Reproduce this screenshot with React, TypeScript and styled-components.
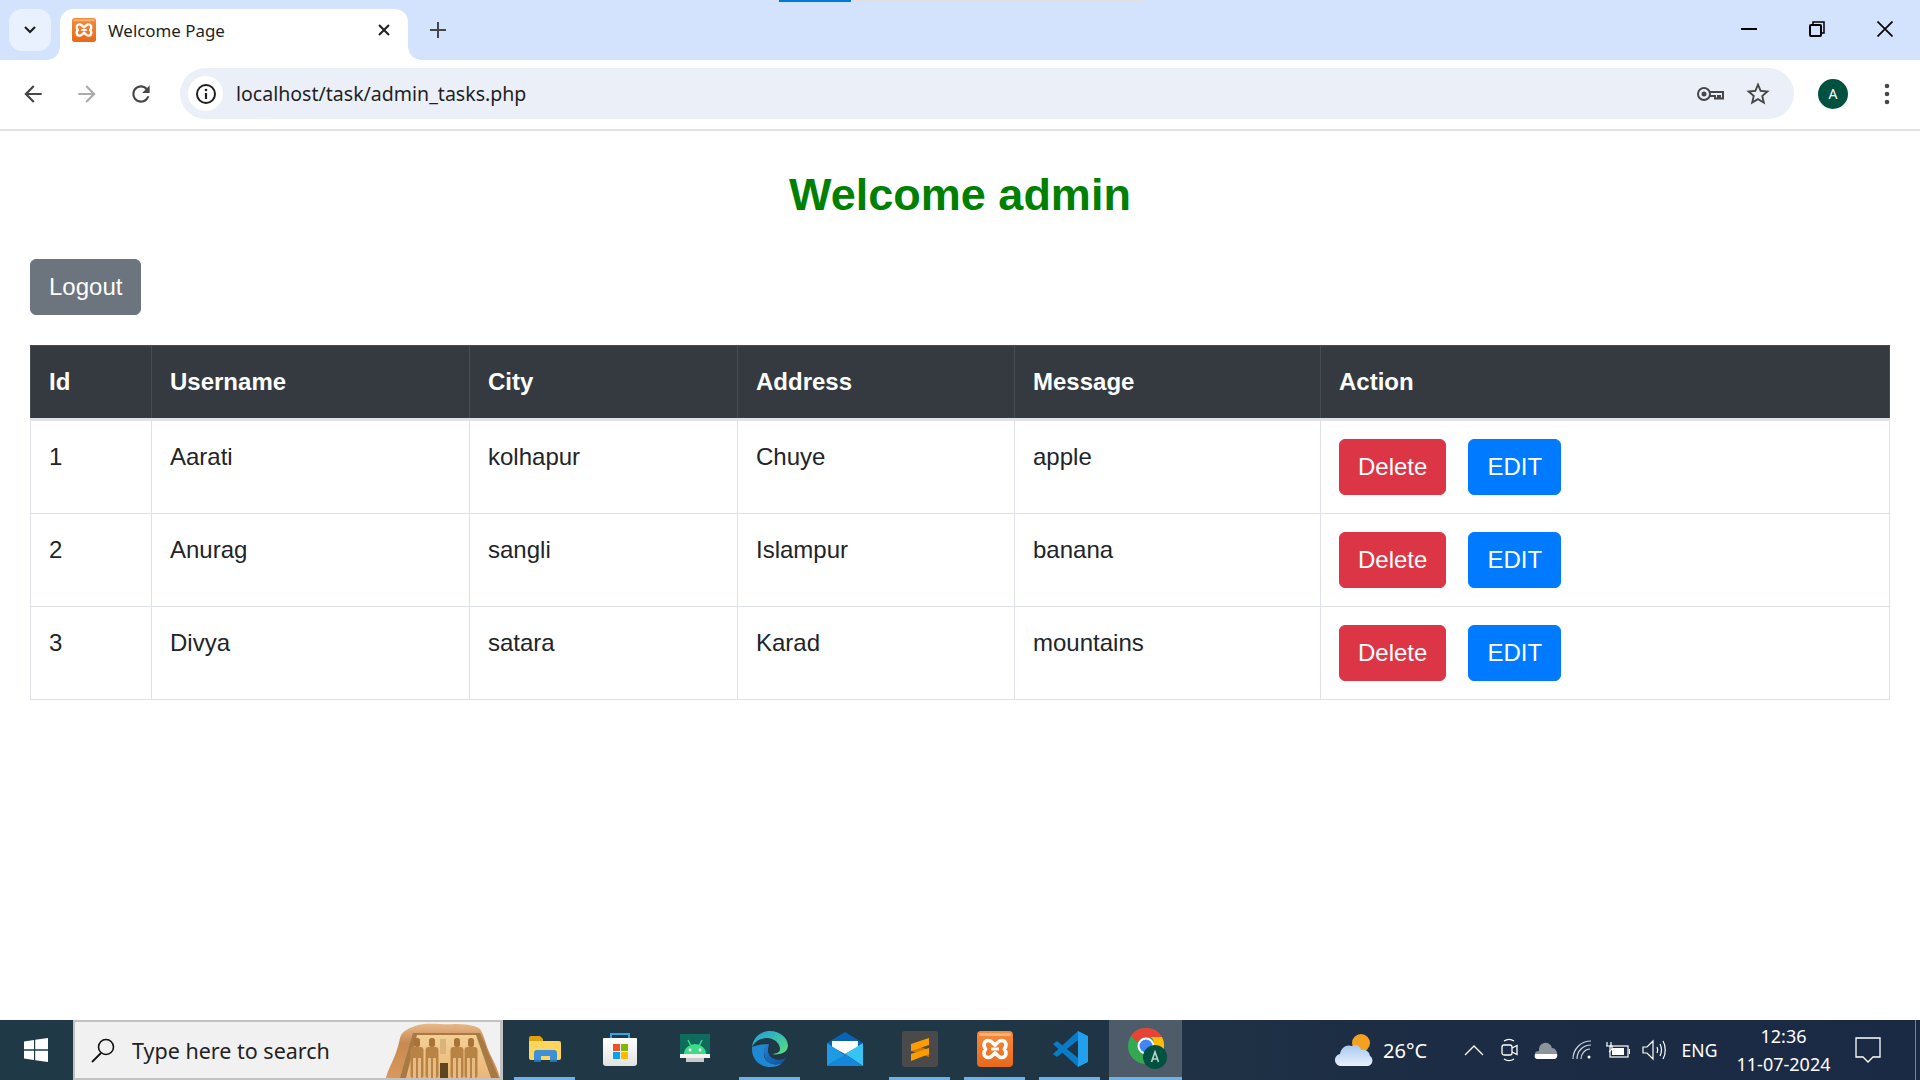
import React from 'react'
import styled, { createGlobalStyle } from 'styled-components'

const GlobalStyle = createGlobalStyle`
  html, body {
    margin: 0;
    height: 100%;
    overflow: hidden;
    background: #fff;
  }
  * {
    box-sizing: border-box;
  }
`

const UI_FONT = `'Noto Sans', 'Open Sans', sans-serif`
const PAGE_FONT = `'Liberation Sans', Arial, sans-serif`

const Screen = styled.div`
  width: 1920px;
  height: 1080px;
  display: flex;
  flex-direction: column;
  font-family: ${PAGE_FONT};
`

// browser tab strip
const TabStrip = styled.div`
  position: relative;
  height: 60px;
  flex: none;
  display: flex;
  align-items: flex-start;
  padding: 9px 0 0 9px;
  background: #d3e3fd;
`

const LoadBar = styled.div<{ $left: number; $width: number; $color: string }>`
  position: absolute;
  top: 0;
  left: ${p => p.$left}px;
  width: ${p => p.$width}px;
  height: 2px;
  background: ${p => p.$color};
`

const TabSearch = styled.div`
  width: 42px;
  height: 42px;
  flex: none;
  display: flex;
  align-items: center;
  justify-content: center;
  border-radius: 13px;
  background: #e9f0fe;
`

const Tab = styled.div`
  position: relative;
  width: 348px;
  height: 51px;
  margin-left: 9px;
  flex: none;
  display: flex;
  align-items: center;
  gap: 12px;
  padding: 0 18px 9px 12px;
  border-radius: 13px 13px 0 0;
  background: #fff;

  &:before,
  &:after {
    content: '';
    position: absolute;
    bottom: 0;
    width: 13px;
    height: 13px;
  }
  &:before {
    left: -13px;
    background: radial-gradient(circle at 0 0, #d3e3fd 12.5px, #fff 13px);
  }
  &:after {
    right: -13px;
    background: radial-gradient(circle at 100% 0, #d3e3fd 12.5px, #fff 13px);
  }
`

const TabTitle = styled.span`
  flex: 1;
  padding-top: 1px;
  font-family: ${UI_FONT};
  font-size: 16.9px;
  color: #1f1f1f;
`

const NewTab = styled.div`
  width: 30px;
  height: 30px;
  margin: 6px 0 0 15px;
  display: flex;
  align-items: center;
  justify-content: center;
`

const WindowControls = styled.div`
  display: flex;
  margin-left: auto;
  padding: 0 1px 0 0;
`

const WindowButton = styled.div`
  width: 68px;
  height: 42px;
  margin-top: -1px;
  display: flex;
  align-items: center;
  justify-content: center;
`

// address bar row
const Toolbar = styled.div`
  height: 71px;
  flex: none;
  display: flex;
  align-items: center;
  padding: 0 0 2px 6px;
  border-bottom: 2px solid #e3e3e3;
  border-radius: 12px 12px 0 0;
  background: #fff;
`

const ToolButton = styled.div`
  width: 54px;
  height: 42px;
  flex: none;
  display: flex;
  align-items: center;
  justify-content: center;
`

const Omnibox = styled.div`
  width: 1614px;
  height: 51px;
  margin-left: 12px;
  flex: none;
  display: flex;
  align-items: center;
  padding: 0 12px 0 8px;
  border-radius: 26px;
  background: #ebeff8;
`

const SiteInfo = styled.div`
  width: 35px;
  height: 35px;
  flex: none;
  display: flex;
  align-items: center;
  justify-content: center;
  border-radius: 50%;
  background: #fff;
`

const Url = styled.span`
  flex: 1;
  margin-left: 13px;
  font-family: ${UI_FONT};
  font-size: 19.55px;
  color: #1f1f1f;
`

const OmniIcon = styled.div`
  width: 48px;
  display: flex;
  justify-content: center;
`

const Avatar = styled.div`
  width: 30px;
  height: 30px;
  margin-left: 24px;
  flex: none;
  display: flex;
  align-items: center;
  justify-content: center;
  border-radius: 50%;
  font-family: ${UI_FONT};
  font-size: 14px;
  color: #fff;
  background: #00513f;
`

const Kebab = styled.div`
  width: 24px;
  margin-left: 27px;
  display: flex;
  justify-content: center;
`

// page
const Page = styled.main`
  flex: 1;
  min-height: 0;
  padding: 35px 30px 0;
`

const Heading = styled.h1`
  margin: 0 0 35px;
  text-align: center;
  font-size: 45px;
  line-height: 58px;
  font-weight: 700;
  color: #008000;
`

const Button = styled.button<{ $bg: string }>`
  display: block;
  height: 56px;
  padding: 0 18px;
  border: 1px solid ${p => p.$bg};
  border-radius: 6px;
  font-family: ${PAGE_FONT};
  font-size: 24px;
  color: #fff;
  background: ${p => p.$bg};
`

const Table = styled.table`
  width: 1859px;
  margin-top: 30px;
  table-layout: fixed;
  border-collapse: collapse;
  font-size: 24px;
  line-height: 36px;
  color: #212529;
`

const HeadCell = styled.th`
  padding: 18px;
  text-align: left;
  font-weight: 700;
  color: #fff;
  background: #343a40;
  border: 1px solid #454d55;
  border-bottom-width: 3px;
  border-bottom-color: #dee2e6;
`

const Cell = styled.td`
  height: 93px;
  padding: 18px;
  vertical-align: top;
  border: 1px solid #dee2e6;
`

const Actions = styled.div`
  display: flex;
  gap: 22px;
`

// taskbar
const Taskbar = styled.footer`
  height: 60px;
  flex: none;
  display: flex;
  align-items: stretch;
  color: #fff;
  font-family: ${UI_FONT};
  background: linear-gradient(90deg, #203946 0%, #203745 50%, #1c2c44 75%, #1b2a44 100%);
`

const StartButton = styled.div`
  width: 73px;
  flex: none;
  display: flex;
  align-items: center;
  justify-content: center;
  padding-right: 1px;
`

const SearchBox = styled.div`
  width: 430px;
  flex: none;
  display: flex;
  align-items: center;
  padding-left: 16px;
  border: 2px solid #c2c2c2;
  border-right-width: 3px;
  background: #f1f1f1;
  overflow: hidden;
`

const SearchText = styled.span`
  flex: 1;
  margin-left: 17px;
  font-size: 21.5px;
  color: #222;
`

const Apps = styled.div`
  display: flex;
  padding-left: 4px;
`

const AppTile = styled.div<{ $open?: boolean; $active?: boolean }>`
  position: relative;
  width: ${p => (p.$active ? '73px' : '75px')};
  margin-left: ${p => (p.$active ? '2px' : '0')};
  display: flex;
  align-items: center;
  justify-content: center;
  padding-bottom: 2px;
  background: ${p => (p.$active ? '#4d5c68' : 'transparent')};

  &:after {
    content: '';
    display: ${p => (p.$open ? 'block' : 'none')};
    position: absolute;
    bottom: 0;
    height: 3px;
    left: ${p => (p.$active ? '0' : '7px')};
    right: ${p => (p.$active ? '0' : '7px')};
    background: #6cb2e8;
  }
`

const Tray = styled.div`
  display: flex;
  margin-left: auto;
  align-items: center;
`

const Weather = styled.div`
  width: 121px;
  display: flex;
  align-items: center;
  gap: 10px;
  font-size: 20px;
`

const TraySlot = styled.div<{ $w: number }>`
  width: ${p => p.$w}px;
  display: flex;
  justify-content: center;
  align-items: center;
  font-size: 17.5px;
`

const Clock = styled.div`
  width: 113px;
  text-align: center;
  font-size: 18px;
  line-height: 28px;
`

const ShowDesktop = styled.div`
  width: 24px;
  align-self: stretch;
  display: flex;
  justify-content: flex-end;
  padding-right: 4px;

  &:after {
    content: '';
    width: 1px;
    background: #77828f;
  }
`

type Row = { id: number; username: string; city: string; address: string; message: string }

const rows: Row[] = [
  { id: 1, username: 'Aarati', city: 'kolhapur', address: 'Chuye', message: 'apple' },
  { id: 2, username: 'Anurag', city: 'sangli', address: 'Islampur', message: 'banana' },
  { id: 3, username: 'Divya', city: 'satara', address: 'Karad', message: 'mountains' },
]

const columns = [
  { name: 'Id', width: 121 },
  { name: 'Username', width: 318 },
  { name: 'City', width: 268 },
  { name: 'Address', width: 277 },
  { name: 'Message', width: 306 },
  { name: 'Action', width: 569 },
]

const XamppIcon = ({ size }: { size: number }) => (
  <svg width={size} height={size} viewBox="0 0 36 36">
    <defs>
      <linearGradient id={`xg${size}`} x1="0" y1="0" x2="0" y2="1">
        <stop offset="0" stopColor="#f58b3b" />
        <stop offset="1" stopColor="#e8691a" />
      </linearGradient>
    </defs>
    <rect width="36" height="36" rx="4" fill={`url(#xg${size})`} />
    <rect x="2" y="2" width="32" height="3" rx="1.5" fill="#f9b27c" />
    <path
      d="M11.500 9.500C7 9.500 5.800 14 8.500 18 5.800 22 7 26.500 11.500 26.500 14.500 26.500 16 23.500 18 22 20 23.500 21.500 26.500 24.500 26.500 29 26.500 30.200 22 27.500 18 30.200 14 29 9.500 24.500 9.500 21.500 9.500 20 12.500 18 14 16 12.500 14.500 9.500 11.500 9.500Z"
      fill="none"
      stroke="#fff"
      strokeWidth="3.6"
    />
    <path d="M14 18h8" stroke="#fff" strokeWidth="3" />
  </svg>
)

const ExplorerIcon = () => (
  <svg width="34" height="28" viewBox="0 0 34 28">
    <path d="M1 3a2 2 0 0 1 2-2h9l3 3v4H1z" fill="#dfa20c" />
    <path d="M1 6h30a2 2 0 0 1 2 2v15a2 2 0 0 1-2 2H3a2 2 0 0 1-2-2z" fill="#fcd65f" />
    <path d="M6 25V18a3 3 0 0 1 3-3h17a3 3 0 0 1 3 3v7h-7v-4h-9v4z" fill="#3f8fd6" />
    <path d="M6 25h7v2H6zM22 25h7v2h-7z" fill="#2a6fb4" />
  </svg>
)

const StoreIcon = () => (
  <svg width="36" height="36" viewBox="0 0 36 36">
    <defs>
      <linearGradient id="bag" x1="0" y1="0" x2="0" y2="1">
        <stop offset="0" stopColor="#fff" />
        <stop offset="1" stopColor="#e2e2e2" />
      </linearGradient>
    </defs>
    <path d="M9 8V3h18v5" fill="none" stroke="#2aa7e8" strokeWidth="2" />
    <path d="M2 7h32a1 1 0 0 1 1 1v24a3 3 0 0 1-3 3H4a3 3 0 0 1-3-3V8a1 1 0 0 1 1-1z" fill="url(#bag)" />
    <rect x="11" y="13" width="7" height="7" fill="#f25022" />
    <rect x="19" y="13" width="7" height="7" fill="#7fba00" />
    <rect x="11" y="21" width="7" height="7" fill="#00a4ef" />
    <rect x="19" y="21" width="7" height="7" fill="#ffb900" />
  </svg>
)

const AndroidIcon = () => (
  <svg width="30" height="30" viewBox="0 0 30 30">
    <rect width="30" height="24" fill="#0f6b5d" />
    <path d="M4 20a11 10 0 0 1 22 0z" fill="#3ddc84" />
    <path d="M8 6l3 6M22 6l-3 6" stroke="#3ddc84" strokeWidth="1.5" />
    <circle cx="10" cy="16" r="1.4" fill="#fff" />
    <circle cx="20" cy="16" r="1.4" fill="#fff" />
    <rect y="20" width="30" height="4" fill="#f2f2f2" />
    <rect x="6" y="24" width="18" height="4" fill="#c9c9c9" />
  </svg>
)

const EdgeIcon = () => (
  <svg width="36" height="36" viewBox="0 0 36 36">
    <defs>
      <linearGradient id="edgeTop" x1="0" y1="0" x2="1" y2="1">
        <stop offset="0" stopColor="#1b9de2" />
        <stop offset="1" stopColor="#5ae07a" />
      </linearGradient>
      <linearGradient id="edgeLow" x1="0" y1="0" x2="1" y2="1">
        <stop offset="0" stopColor="#2280cf" />
        <stop offset="1" stopColor="#0d4f9e" />
      </linearGradient>
    </defs>
    <path d="M18 0C8 0 1 7 0 16c3-6 9-9 15-9 7 0 13 5 13 11 0 2-1 3-3 4-3 1-5 1-5 1 3 1 15 1 16-8C36 7 28 0 18 0z" fill="url(#edgeTop)" />
    <path d="M0 16C-1 27 7 36 18 36c5 0 9-1 12-4-3 1-6 2-9 1-6-1-10-6-9-12 0-4 3-7 5-8-7 0-14 2-17 3z" fill="#1f88d5" />
    <path d="M17 13c-3 1-5 4-5 8 0 6 3 11 9 12 3 1 6 0 9-1 2-2 3-3 4-5-3 2-9 3-14 0-4-3-5-7-3-14z" fill="url(#edgeLow)" />
  </svg>
)

const MailIcon = () => (
  <svg width="36" height="34" viewBox="0 0 36 34">
    <path d="M0 11L18 0l18 11v6H0z" fill="#0a62b5" />
    <path d="M5 9h26v6L18 22 5 15z" fill="#fff" />
    <path d="M0 11l18 11 18-11v23L18 22z" fill="#38c4f2" />
    <path d="M0 11l18 12L0 34z" fill="#1f9be6" />
    <path d="M0 34l18-12 18 12z" fill="#1487d8" />
  </svg>
)

const SublimeIcon = () => (
  <svg width="36" height="36" viewBox="0 0 36 36">
    <rect width="36" height="36" rx="3" fill="#4a4a4a" />
    <path d="M9 13v7l18 6v-7z" fill="#c97a00" />
    <path d="M27 7v7L9 20v-7z" fill="#ff9d00" />
    <path d="M27 17v6L9 30v-7z" fill="#ff9d00" />
  </svg>
)

const VsCodeIcon = () => (
  <svg width="36" height="36" viewBox="0 0 36 36">
    <path d="M26 0l10 5v26l-10 5z" fill="#23a0ed" />
    <path d="M26 0v9L10 22l-5 4-4-3z" fill="#0a7bc6" />
    <path d="M26 36v-9L10 14 5 10 1 13z" fill="#0a7bc6" />
  </svg>
)

const ChromeIcon = () => (
  <svg width="42" height="42" viewBox="-3 0 42 42">
    <circle cx="18" cy="18" r="18" fill="#34a853" />
    <path d="M18 0a18 18 0 0 1 16 9H18a9 9 0 0 0-8.500 5.500L3 8A18 18 0 0 1 18 0z" fill="#ea4335" />
    <path d="M34 9a18 18 0 0 1-3 21l-6-11a8 8 0 0 0-2-10z" fill="#fbbc04" />
    <circle cx="18" cy="18" r="8.500" fill="#fff" />
    <circle cx="18" cy="18" r="6.500" fill="#4285f4" />
    <circle cx="27" cy="29" r="12" fill="#00513f" />
    <path d="M23.500 34l3.500-10 3.500 10M25 31h4" fill="none" stroke="#b9d3cb" strokeWidth="1.600" />
  </svg>
)

const CloudIcon = () => (
  <svg width="38" height="34" viewBox="0 0 38 34">
    <defs>
      <linearGradient id="cloud" x1="0" y1="0" x2="0" y2="1">
        <stop offset="0" stopColor="#a8c8f0" />
        <stop offset="1" stopColor="#e8f1fb" />
      </linearGradient>
    </defs>
    <circle cx="26" cy="10" r="9" fill="#f3a11f" />
    <path d="M7 33a6 6 0 0 1-2-12c1-7 7-10 12-8 3-2 8-1 9 4 3-1 8 0 9 6 4 2 3 10-3 10z" fill="url(#cloud)" />
  </svg>
)

// search box doodle
const AbuSimbel = () => (
  <svg width="120" height="56" viewBox="0 0 120 56">
    <defs>
      <linearGradient id="rock" x1="0" y1="0" x2="0" y2="1">
        <stop offset="0" stopColor="#e8b98a" />
        <stop offset="0.35" stopColor="#c88a52" />
        <stop offset="1" stopColor="#d9985c" />
      </linearGradient>
      <linearGradient id="front" x1="0" y1="0" x2="0" y2="1">
        <stop offset="0" stopColor="#f3cf94" />
        <stop offset="1" stopColor="#e9b878" />
      </linearGradient>
    </defs>
    <path d="M6 56C9 44 16 36 20 16 22 8 30 6 38 3 48 0 64 3 74 2 84 2 96 3 100 7 104 12 106 24 110 32 114 40 118 48 120 56z" fill="url(#rock)" />
    <path d="M20 56L33 11H100L119 56z" fill="#a77a45" />
    <path d="M26 56L37 13H96L111 56z" fill="url(#front)" />
    <rect x="60" y="17" width="6" height="15" fill="#dcb27c" />
    <rect x="60" y="41" width="8" height="15" fill="#5f4520" />
    {[37, 52, 77, 91].map(x => (
      <g key={x}>
        <rect x={x - 3} y="16" width="6" height="9" rx="2.500" fill="#a97238" />
        <rect x={x - 6.500} y="25" width="13" height="31" rx="3" fill="#b98345" />
        <rect x={x - 4} y="36" width="3" height="20" fill="#e6bb84" />
        <rect x={x + 1} y="36" width="3" height="20" fill="#e6bb84" />
      </g>
    ))}
  </svg>
)

export default function App() {
  return (
    <Screen>
      <GlobalStyle />
      <TabStrip>
        <LoadBar $left={779} $width={72} $color="#0078d7" />
        <LoadBar $left={853} $width={288} $color="#e0e0e0" />
        <TabSearch>
          <svg width="14" height="10" viewBox="0 0 14 10">
            <path d="M2 2l5 5 5-5" fill="none" stroke="#1f1f1f" strokeWidth="2.200" />
          </svg>
        </TabSearch>
        <Tab>
          <XamppIcon size={24} />
          <TabTitle>Welcome Page</TabTitle>
          <svg width="12" height="12" viewBox="0 0 12 12">
            <path d="M1 1l10 10M11 1L1 11" stroke="#1f1f1f" strokeWidth="2" />
          </svg>
        </Tab>
        <NewTab>
          <svg width="16" height="16" viewBox="0 0 16 16">
            <path d="M8 0v16M0 8h16" stroke="#444746" strokeWidth="2" />
          </svg>
        </NewTab>
        <WindowControls>
          <WindowButton>
            <svg width="16" height="2" viewBox="0 0 16 2">
              <path d="M0 1h16" stroke="#000" strokeWidth="2" />
            </svg>
          </WindowButton>
          <WindowButton>
            <svg width="16" height="16" viewBox="0 0 16 16">
              <path d="M4 3V1h11v11h-3" fill="none" stroke="#000" strokeWidth="1.500" />
              <rect x="1" y="4" width="11" height="11" rx="1" fill="none" stroke="#000" strokeWidth="2" />
            </svg>
          </WindowButton>
          <WindowButton>
            <svg width="16" height="16" viewBox="0 0 16 16">
              <path d="M.5.500l15 15M15.500.500l-15 15" stroke="#000" strokeWidth="1.700" />
            </svg>
          </WindowButton>
        </WindowControls>
      </TabStrip>

      <Toolbar>
        <ToolButton>
          <svg width="26" height="26" viewBox="0 0 24 24" fill="#474747">
            <path d="M20 11H7.830l5.590-5.590L12 4l-8 8 8 8 1.410-1.410L7.830 13H20v-2z" />
          </svg>
        </ToolButton>
        <ToolButton>
          <svg width="26" height="26" viewBox="0 0 24 24" fill="#ababab">
            <path d="M12 4l-1.410 1.410L16.170 11H4v2h12.170l-5.580 5.590L12 20l8-8z" />
          </svg>
        </ToolButton>
        <ToolButton>
          <svg width="26" height="26" viewBox="0 0 24 24" fill="#474747">
            <path d="M17.650 6.350C16.200 4.900 14.210 4 12 4c-4.420 0-7.990 3.580-7.990 8s3.570 8 7.990 8c3.730 0 6.840-2.550 7.730-6h-2.080c-.82 2.330-3.040 4-5.650 4-3.310 0-6-2.690-6-6s2.690-6 6-6c1.660 0 3.140.690 4.220 1.780L13 11h7V4l-2.350 2.350z" />
          </svg>
        </ToolButton>
        <Omnibox>
          <SiteInfo>
            <svg width="22" height="22" viewBox="0 0 22 22">
              <circle cx="11" cy="11" r="9" fill="none" stroke="#1f1f1f" strokeWidth="2" />
              <path d="M11 10v6" stroke="#1f1f1f" strokeWidth="2.200" />
              <circle cx="11" cy="7" r="1.300" fill="#1f1f1f" />
            </svg>
          </SiteInfo>
          <Url>localhost/task/admin_tasks.php</Url>
          <OmniIcon>
            <svg width="28" height="16" viewBox="0 0 28 16">
              <circle cx="8" cy="8" r="6" fill="none" stroke="#474747" strokeWidth="2" />
              <circle cx="8" cy="8" r="2.500" fill="#474747" />
              <path d="M14 6h13v6.500h-3V10h-2v2.500h-3V10h-5" fill="none" stroke="#474747" strokeWidth="2" />
            </svg>
          </OmniIcon>
          <OmniIcon>
            <svg width="28" height="28" viewBox="0 0 24 24" fill="#474747">
              <path d="M22 9.240l-7.190-.62L12 2 9.190 8.630 2 9.240l5.460 4.730L5.820 21 12 17.270 18.180 21l-1.630-7.030L22 9.240zM12 15.400l-3.760 2.270 1-4.280-3.320-2.880 4.380-.38L12 6.100l1.710 4.040 4.380.38-3.320 2.880 1 4.280L12 15.400z" />
            </svg>
          </OmniIcon>
        </Omnibox>
        <Avatar>A</Avatar>
        <Kebab>
          <svg width="6" height="24" viewBox="0 0 6 24" fill="#474747">
            <circle cx="3" cy="4" r="2.300" />
            <circle cx="3" cy="12" r="2.300" />
            <circle cx="3" cy="20" r="2.300" />
          </svg>
        </Kebab>
      </Toolbar>

      <Page>
        <Heading>Welcome admin</Heading>
        <Button $bg="#6c757d">Logout</Button>
        <Table>
          <colgroup>
            {columns.map(c => (
              <col key={c.name} width={c.width} />
            ))}
          </colgroup>
          <thead>
            <tr>
              {columns.map(c => (
                <HeadCell key={c.name}>{c.name}</HeadCell>
              ))}
            </tr>
          </thead>
          <tbody>
            {rows.map(r => (
              <tr key={r.id}>
                <Cell>{r.id}</Cell>
                <Cell>{r.username}</Cell>
                <Cell>{r.city}</Cell>
                <Cell>{r.address}</Cell>
                <Cell>{r.message}</Cell>
                <Cell>
                  <Actions>
                    <Button $bg="#dc3545">Delete</Button>
                    <Button $bg="#007bff">EDIT</Button>
                  </Actions>
                </Cell>
              </tr>
            ))}
          </tbody>
        </Table>
      </Page>

      <Taskbar>
        <StartButton>
          <svg width="24" height="24" viewBox="0 0 24 24" fill="#fff">
            <path d="M0 3.500L10 2v9.300H0zM11.200 1.800L24 0v11.300H11.200zM0 12.700h10V22L0 20.500zM11.200 12.700H24V24l-12.800-1.800z" />
          </svg>
        </StartButton>
        <SearchBox>
          <svg width="24" height="26" viewBox="0 0 24 26">
            <circle cx="15" cy="10" r="7.500" fill="none" stroke="#111" strokeWidth="1.600" />
            <path d="M10 16L1 25" stroke="#111" strokeWidth="1.800" />
          </svg>
          <SearchText>Type here to search</SearchText>
          <AbuSimbel />
        </SearchBox>
        <Apps>
          <AppTile $open>
            <ExplorerIcon />
          </AppTile>
          <AppTile>
            <StoreIcon />
          </AppTile>
          <AppTile>
            <AndroidIcon />
          </AppTile>
          <AppTile $open>
            <EdgeIcon />
          </AppTile>
          <AppTile>
            <MailIcon />
          </AppTile>
          <AppTile $open>
            <SublimeIcon />
          </AppTile>
          <AppTile $open>
            <XamppIcon size={36} />
          </AppTile>
          <AppTile $open>
            <VsCodeIcon />
          </AppTile>
          <AppTile $open $active>
            <ChromeIcon />
          </AppTile>
        </Apps>
        <Tray>
          <Weather>
            <CloudIcon />
            26°C
          </Weather>
          <TraySlot $w={36}>
            <svg width="20" height="12" viewBox="0 0 20 12">
              <path d="M1 11l9-9 9 9" fill="none" stroke="#fff" strokeWidth="1.400" />
            </svg>
          </TraySlot>
          <TraySlot $w={36}>
            <svg width="18" height="24" viewBox="0 0 18 24" fill="none" stroke="#fff" strokeWidth="1.300">
              <rect x="1" y="7" width="10" height="10" rx="2" />
              <path d="M11 10l5-2.500v9L11 14M3 3c3-2 7-2 10 0M3 21c3 2 7 2 10 0" />
            </svg>
          </TraySlot>
          <TraySlot $w={36}>
            <svg width="26" height="18" viewBox="0 0 26 18">
              <path d="M6 10a6 6 0 0 1 13-3c4 0 6 5 5 8H4C1 15 1 10 6 10z" fill="#8b939b" />
              <path d="M2 13h22c1 3-1 5-3 5H5c-3 0-4-2-3-5z" fill="#fff" />
            </svg>
          </TraySlot>
          <TraySlot $w={36}>
            <svg width="20" height="20" viewBox="0 0 20 20" fill="none" stroke="#cfd4da" strokeWidth="1.200">
              <path d="M1 19C1 9 9 1 19 1M5 19c0-8 6-14 14-14M9 19c0-5 4-10 9-10" />
              <circle cx="17" cy="17" r="1.500" fill="#fff" stroke="none" />
            </svg>
          </TraySlot>
          <TraySlot $w={36}>
            <svg width="24" height="18" viewBox="0 0 24 18" fill="none" stroke="#fff" strokeWidth="1.200">
              <rect x="4" y="5" width="18" height="11" />
              <rect x="6" y="7" width="12" height="7" fill="#fff" stroke="none" />
              <path d="M23.500 8v5M1 1v4M5 1v4M0 5h6v3l-3 3" />
            </svg>
          </TraySlot>
          <TraySlot $w={36}>
            <svg width="24" height="22" viewBox="0 0 24 22" fill="none" stroke="#fff" strokeWidth="1.200">
              <path d="M1 8h4l6-6v18l-6-6H1zM15 8c1 2 1 4 0 6M18 5c2 4 2 8 0 12M21 2c3 5 3 13 0 18" />
            </svg>
          </TraySlot>
          <TraySlot $w={55}>ENG</TraySlot>
          <Clock>
            12:36
            <br />
            11-07-2024
          </Clock>
          <TraySlot $w={56}>
            <svg width="26" height="26" viewBox="0 0 26 26">
              <path d="M1 1h24v19h-7l-5 5-5-5H1z" fill="none" stroke="#fff" strokeWidth="1.300" />
            </svg>
          </TraySlot>
          <ShowDesktop />
        </Tray>
      </Taskbar>
    </Screen>
  )
}
